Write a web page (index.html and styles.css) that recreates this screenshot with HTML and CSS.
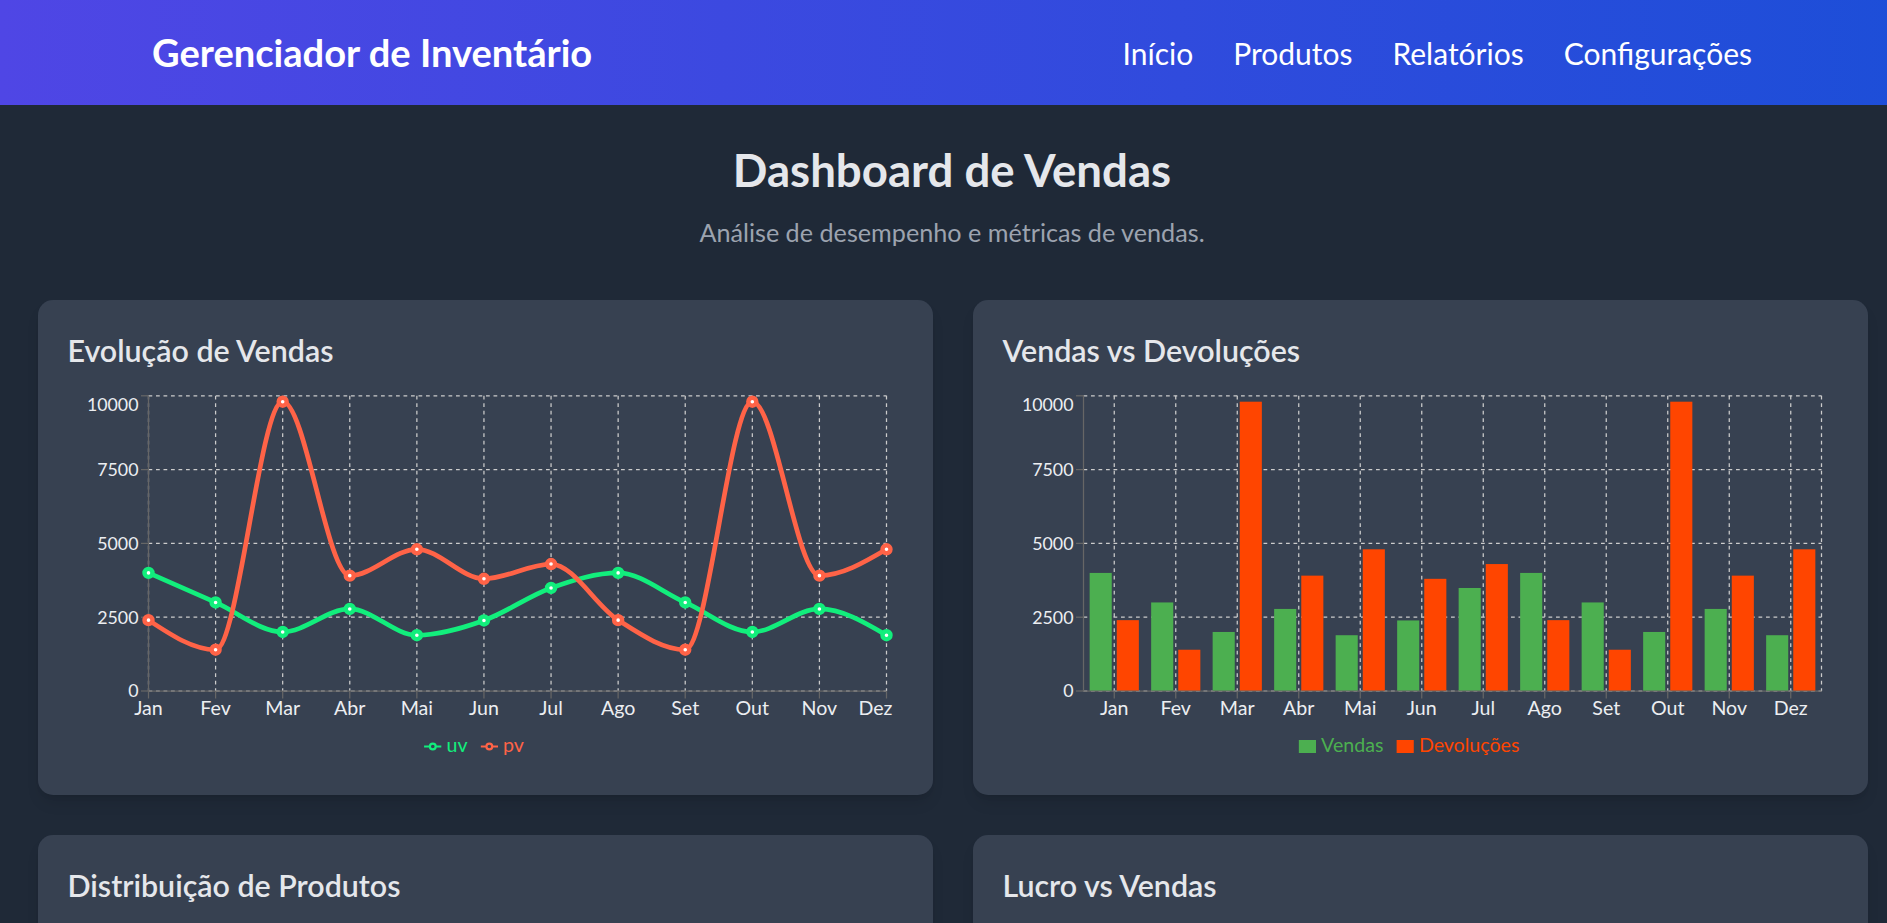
FILE: index.html
```html
<!DOCTYPE html>
<html lang="pt-BR">
<head>
<meta charset="utf-8">
<title>Gerenciador de Inventário</title>
<link rel="stylesheet" href="styles.css">
</head>
<body>
<div class="page">
  <header class="topbar">
    <div class="topbar-inner">
      <h1 class="brand">Gerenciador de Inventário</h1>
      <nav class="nav">
        <a href="#" class="nav-link">Início</a>
        <a href="#" class="nav-link">Produtos</a>
        <a href="#" class="nav-link">Relatórios</a>
        <a href="#" class="nav-link">Configurações</a>
      </nav>
    </div>
  </header>
  <main class="main">
    <section class="intro">
      <h2 class="intro-title">Dashboard de Vendas</h2>
      <p class="intro-sub">Análise de desempenho e métricas de vendas.</p>
    </section>
    <div class="cards">
      <section class="card">
        <h3 class="card-title">Evolução de Vendas</h3>
        <div class="chart" id="chart-line"></div>
      </section>
      <section class="card">
        <h3 class="card-title">Vendas vs Devoluções</h3>
        <div class="chart" id="chart-bar"></div>
      </section>
      <section class="card">
        <h3 class="card-title">Distribuição de Produtos</h3>
        <div class="chart"></div>
      </section>
      <section class="card">
        <h3 class="card-title">Lucro vs Vendas</h3>
        <div class="chart"></div>
      </section>
    </div>
  </main>
</div>
<script src="chart.js"></script>
</body>
</html>
```

FILE: styles.css
```css
* { box-sizing: border-box; }
html, body { margin: 0; padding: 0; overflow-x: hidden; }
body {
  background: #1f2937;
  color: #e5e7eb;
  font-family: Lato, "Open Sans", sans-serif;
}
.page { width: 1904px; }

.topbar {
  background: linear-gradient(to right, #4f46e5, #1d4ed8);
  color: #ffffff;
}
.topbar-inner {
  width: 1600px;
  margin: 0 auto;
  padding: 30px 0;
  display: flex;
  justify-content: space-between;
  align-items: center;
}
.brand {
  margin: 0;
  font-size: 38.1px;
  line-height: 45px;
  font-weight: 700;
}
.nav { display: flex; gap: 40px; }
.nav-link {
  color: #ffffff;
  text-decoration: none;
  font-size: 30px;
  line-height: 40px;
}

.main { padding: 40px 37.5px; }
.intro { text-align: center; margin-bottom: 50px; }
.intro-title {
  margin: 0 0 20px;
  font-size: 45.6px;
  line-height: 50px;
  font-weight: 700;
  color: #e5e7eb;
}
.intro-sub {
  margin: 0;
  font-size: 25.2px;
  line-height: 35px;
  color: #9ca3af;
}

.cards {
  display: grid;
  grid-template-columns: 1fr 1fr;
  gap: 40px;
}
.card {
  background: #374151;
  border-radius: 15px;
  padding: 30px;
  box-shadow: 0 10px 15px -3px rgba(0,0,0,0.1), 0 4px 6px -4px rgba(0,0,0,0.1);
}
.card-title {
  margin: 0 0 20px;
  font-size: 30.4px;
  line-height: 40px;
  font-weight: 600;
  color: #e5e7eb;
}
.chart { height: 375px; }
.chart svg { display: block; font-family: inherit; }

.grid-line { stroke: #cccccc; stroke-width: 1.25; stroke-dasharray: 3.75 3.75; }
.axis-line { stroke: #666666; stroke-width: 1.25; }
.tick-x { font-size: 19.6px; fill: #eceef1; }
.tick-y { font-size: 17.8px; fill: #eceef1; }
.legend-text { font-size: 19.6px; }
.series-line { fill: none; stroke-width: 4.7; }
.series-dot { fill: #ffffff; stroke-width: 4.4; }
```

FILE: chart.js
```js
(function () {
  var NS = 'http://www.w3.org/2000/svg';
  var months = ['Jan','Fev','Mar','Abr','Mai','Jun','Jul','Ago','Set','Out','Nov','Dez'];
  var uv = [4000,3000,2000,2780,1890,2390,3490,4000,3000,2000,2780,1890];
  var pv = [2400,1398,9800,3908,4800,3800,4300,2400,1398,9800,3908,4800];
  var W = 835, H = 375;
  var X0 = 80.5, X1 = 818.5, YT = 5.8, YB = 301;
  var TICKS = [0, 2500, 5000, 7500, 10000];
  var GREEN = '#12ee7c', TOMATO = '#ff6347', BAR_G = '#4caf50', BAR_R = '#ff4500';

  function y(v) { return YB - v * (YB - YT) / 10000; }
  function r(n) { return Math.round(n * 100) / 100; }
  function make(tag, attrs, parent) {
    var e = document.createElementNS(NS, tag);
    for (var k in attrs) e.setAttribute(k, attrs[k]);
    if (parent) parent.appendChild(e);
    return e;
  }
  function sign(x) { return x < 0 ? -1 : 1; }
  function monotone(pts) {
    var n = pts.length, i;
    var d = 'M' + r(pts[0][0]) + ',' + r(pts[0][1]);
    var t = new Array(n);
    for (i = 1; i < n - 1; i++) {
      var h0 = pts[i][0] - pts[i-1][0], h1 = pts[i+1][0] - pts[i][0];
      var s0 = (pts[i][1] - pts[i-1][1]) / h0, s1 = (pts[i+1][1] - pts[i][1]) / h1;
      var p = (s0 * h1 + s1 * h0) / (h0 + h1);
      t[i] = (sign(s0) + sign(s1)) * Math.min(Math.abs(s0), Math.abs(s1), 0.5 * Math.abs(p)) || 0;
    }
    var h = pts[1][0] - pts[0][0];
    t[0] = (3 * (pts[1][1] - pts[0][1]) / h - t[1]) / 2;
    h = pts[n-1][0] - pts[n-2][0];
    t[n-1] = (3 * (pts[n-1][1] - pts[n-2][1]) / h - t[n-2]) / 2;
    for (i = 0; i < n - 1; i++) {
      var x0 = pts[i][0], y0 = pts[i][1], x1 = pts[i+1][0], y1 = pts[i+1][1], dx = (x1 - x0) / 3;
      d += 'C' + r(x0 + dx) + ',' + r(y0 + dx * t[i]) + ',' + r(x1 - dx) + ',' + r(y1 - dx * t[i+1]) + ',' + r(x1) + ',' + r(y1);
    }
    return d;
  }

  function grid(svg, xs) {
    var g = make('g', {}, svg);
    TICKS.forEach(function (v) { make('line', {'class': 'grid-line', x1: X0, x2: X1, y1: r(y(v)), y2: r(y(v))}, g); });
    xs.forEach(function (x) { make('line', {'class': 'grid-line', x1: r(x), x2: r(x), y1: YT, y2: YB}, g); });
  }
  function axes(svg, xs, lastShift) {
    var g = make('g', {}, svg);
    make('line', {'class': 'axis-line', x1: X0, x2: X1, y1: YB, y2: YB}, g);
    make('line', {'class': 'axis-line', x1: X0, x2: X0, y1: YT, y2: YB}, g);
    xs.forEach(function (x) { make('line', {'class': 'axis-line', x1: r(x), x2: r(x), y1: YB, y2: YB + 7.5}, g); });
    TICKS.forEach(function (v) { make('line', {'class': 'axis-line', x1: X0 - 7.5, x2: X0, y1: r(y(v)), y2: r(y(v))}, g); });
    xs.forEach(function (x, i) {
      var tx = (i === xs.length - 1 && lastShift) ? x - lastShift : x;
      var t = make('text', {'class': 'tick-x', x: r(tx), y: YB + 10, dy: '0.71em', 'text-anchor': 'middle'}, g);
      t.textContent = months[i];
    });
    TICKS.forEach(function (v) {
      var cy = v === 10000 ? 15 : y(v);
      var t = make('text', {'class': 'tick-y', x: X0 - 10, y: r(cy), dy: '0.355em', 'text-anchor': 'end'}, g);
      t.textContent = String(v);
    });
  }
  function legend(svg, items, kind) {
    var g = make('g', {}, svg);
    var parts = [], total = 0;
    items.forEach(function (it, i) {
      var txt = make('text', {'class': 'legend-text', y: 362, fill: it.color}, g);
      txt.textContent = it.label;
      var w = txt.getComputedTextLength();
      parts.push({txt: txt, w: w, color: it.color});
      total += 22.5 + w + (i ? 13 : 0);
    });
    var x = 406 - total / 2;
    parts.forEach(function (p) {
      var icon = make('svg', {x: r(x), y: 356.5 - 8.75, width: 17.5, height: 17.5, viewBox: '0 0 32 32'}, g);
      if (kind === 'line') {
        make('path', {fill: 'none', stroke: p.color, 'stroke-width': 4,
          d: 'M0,16h10.667A5.333,5.333,0,1,1,21.333,16H32M21.333,16A5.333,5.333,0,1,1,10.667,16'}, icon);
      } else {
        make('path', {fill: p.color, d: 'M0,4h32v24h-32z'}, icon);
      }
      p.txt.setAttribute('x', r(x + 22.5));
      x += 22.5 + p.w + 13;
    });
  }
  function svgIn(id) {
    var host = document.getElementById(id);
    return make('svg', {width: W, height: H, viewBox: '0 0 ' + W + ' ' + H}, host);
  }

  (function () {
    var svg = svgIn('chart-line');
    var step = (X1 - X0) / 11;
    var xs = months.map(function (m, i) { return X0 + i * step; });
    grid(svg, xs);
    axes(svg, xs, 11);
    [[uv, GREEN], [pv, TOMATO]].forEach(function (s) {
      var pts = s[0].map(function (v, i) { return [xs[i], y(v)]; });
      make('path', {'class': 'series-line', stroke: s[1], d: monotone(pts)}, svg);
      var g = make('g', {}, svg);
      pts.forEach(function (p) { make('circle', {'class': 'series-dot', stroke: s[1], cx: r(p[0]), cy: r(p[1]), r: 4}, g); });
    });
    legend(svg, [{label: 'uv', color: GREEN}, {label: 'pv', color: TOMATO}], 'line');
  })();

  (function () {
    var svg = svgIn('chart-bar');
    var band = (X1 - X0) / 12, gapC = band * 0.1, bw = (band - 2 * gapC - 5) / 2;
    var xs = months.map(function (m, i) { return X0 + (i + 0.5) * band; });
    grid(svg, xs.concat([X1]));
    var g = make('g', {}, svg);
    months.forEach(function (m, i) {
      var bx = X0 + i * band + gapC;
      make('rect', {x: r(bx), y: r(y(uv[i])), width: r(bw), height: r(YB - y(uv[i])), fill: BAR_G}, g);
      make('rect', {x: r(bx + bw + 5), y: r(y(pv[i])), width: r(bw), height: r(YB - y(pv[i])), fill: BAR_R}, g);
    });
    axes(svg, xs, 0);
    legend(svg, [{label: 'Vendas', color: BAR_G}, {label: 'Devoluções', color: BAR_R}], 'rect');
  })();
})();
```
